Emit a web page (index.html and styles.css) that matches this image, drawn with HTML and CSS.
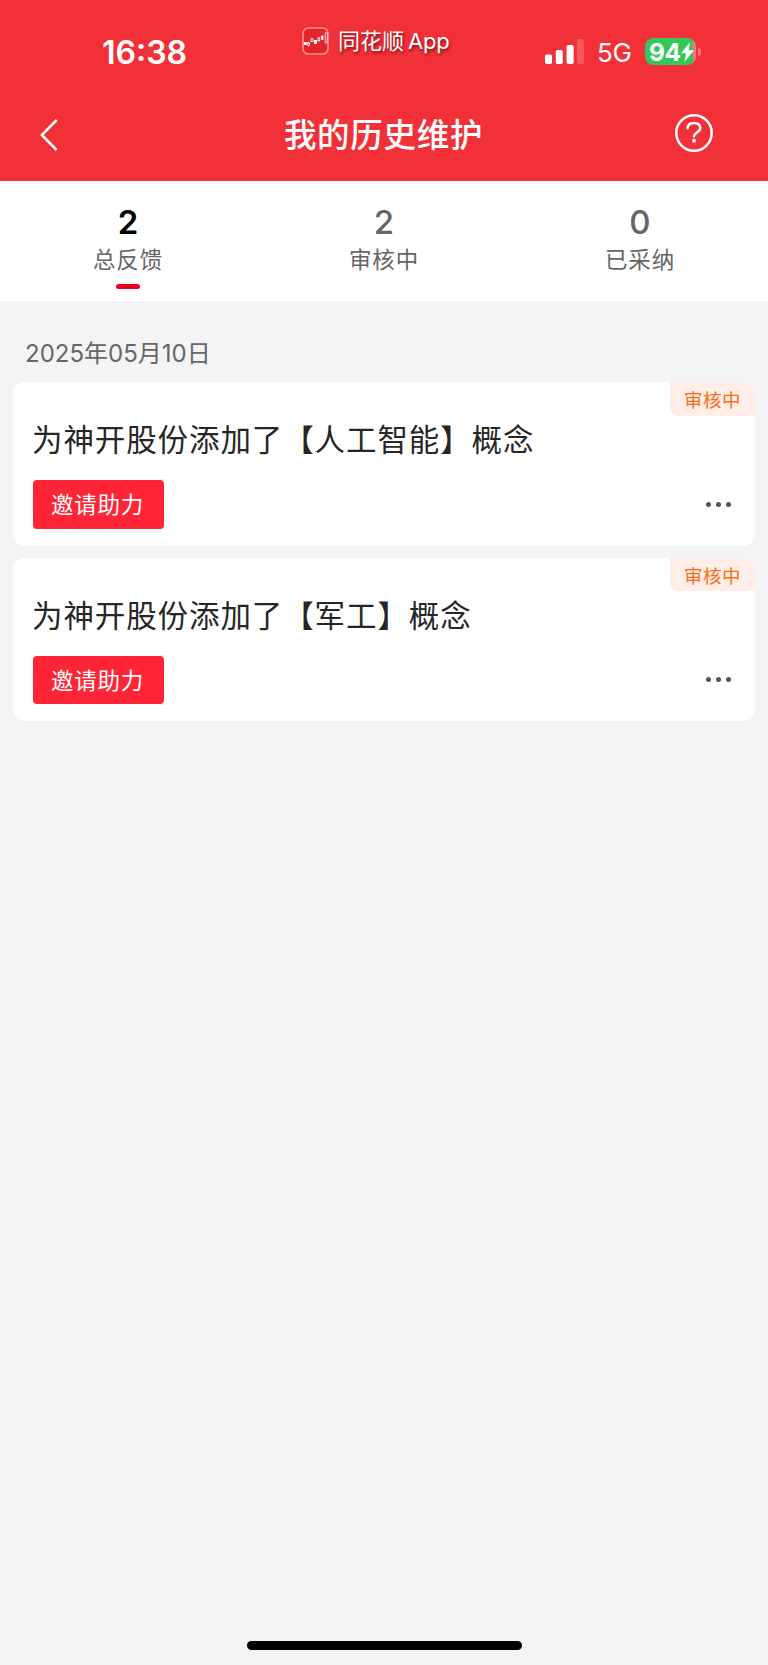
FILE: index.html
```
<!DOCTYPE html>
<html lang="zh-CN">
<head>
<meta charset="utf-8">
<title>我的历史维护</title>
<link rel="stylesheet" href="styles.css">
</head>
<body>
<div class="screen">
  <header class="header">
    <div class="status">
      <div class="time">16:38</div>
      <div class="source">
        <svg class="app-icon" viewBox="0 0 27 28"><rect x="1" y="1" width="25" height="26" rx="5.5" fill="#e3242a" stroke="#f98f91" stroke-width="1.6"/><g fill="#fff"><rect x="1.8" y="15" width="3" height="3"/><rect x="12" y="13" width="3" height="4"/><rect x="19" y="9" width="2.4" height="3.8"/></g><g stroke="#fff" stroke-width=".8" fill="none"><rect x="5.7" y="15.7" width="1.8" height="2.8"/><path d="M6.6 14.6v1.1M6.6 18.5v1.1M10 11v1M16.8 9.8v1.1M16.8 13.7v.8M20.2 8v1"/><rect x="9" y="11.8" width="2" height="2.8"/><rect x="15.9" y="10.9" width="1.8" height="2.8"/><rect x="23.2" y="5.6" width="2" height="10.6" rx=".6"/></g></svg>
        <span class="source-name">同花顺</span><span class="source-app">App</span>
      </div>
      <div class="indicators">
        <svg class="signal" viewBox="0 0 40 26" fill="#fff"><rect x="0" y="15.5" width="7" height="9.5" rx="1.8"/><rect x="10.8" y="11" width="7" height="14" rx="1.8"/><rect x="21.6" y="6" width="7" height="19" rx="1.8"/><rect x="32" y="0" width="7" height="25" rx="1.8" opacity=".2"/></svg>
        <span class="network">5G</span>
        <div class="battery"><span class="level">94</span><svg class="bolt" viewBox="0 0 13 20"><path d="M9.2 0 0 11.2h5L3.4 20 13 8.2H7.6Z" fill="#fff"/></svg></div><i class="cap"></i>
      </div>
    </div>
    <div class="nav">
      <svg class="back" viewBox="0 0 18 32"><path d="M16.7 1 1.8 16 16.7 31" fill="none" stroke="#fff" stroke-width="2.5"/></svg>
      <h1 class="title">我的历史维护</h1>
      <svg class="help" viewBox="0 0 38 38"><circle cx="19" cy="19" r="17.7" fill="none" stroke="#fff" stroke-width="2.5"/><path d="M12.6 14.2C12.8 10.6 15.4 9 19 9c3.7 0 6.3 1.9 6.3 5.1 0 4.1-6 4.2-6.3 8.3" fill="none" stroke="#fff" stroke-width="2.5" stroke-linecap="round"/><circle cx="19" cy="26.7" r="2" fill="#fff"/></svg>
    </div>
  </header>
  <nav class="tabs">
    <div class="tab active"><b class="count">2</b><span class="label">总反馈</span><i class="mark"></i></div>
    <div class="tab"><b class="count">2</b><span class="label">审核中</span></div>
    <div class="tab"><b class="count">0</b><span class="label">已采纳</span></div>
  </nav>
  <main class="list">
    <div class="date"><span>2025</span>年<span>05</span>月<span>10</span>日</div>
    <article class="card">
      <span class="badge">审核中</span>
      <h2 class="text">为神开股份添加了【人工智能】概念</h2>
      <div class="actions"><button class="invite">邀请助力</button><div class="more"><i></i><i></i><i></i></div></div>
    </article>
    <article class="card">
      <span class="badge">审核中</span>
      <h2 class="text">为神开股份添加了【军工】概念</h2>
      <div class="actions"><button class="invite">邀请助力</button><div class="more"><i></i><i></i><i></i></div></div>
    </article>
  </main>
  <div class="home"></div>
</div>
</body>
</html>
```
FILE: styles.css
```
* { box-sizing: border-box; margin: 0; padding: 0; }
body { background: #f4f4f4; font-family: Inter, "Noto Sans CJK SC", sans-serif; }
.screen { width: 768px; height: 1665px; display: flex; flex-direction: column; overflow: hidden; }
svg { display: block; flex: none; }
.header { height: 180.5px; flex: none; background: #f23038; color: #fff; }
.status { display: flex; height: 90px; }
.time { width: 302px; padding: 33px 0 0 102px; font-size: 32px; line-height: 40px; font-weight: 600; }
.source { width: 243px; display: flex; align-items: flex-start; padding-top: 27px; text-shadow: 1px 2px 3px rgba(70,0,0,.65); }
.app-icon { width: 27px; height: 28px; }
.source-name { margin-left: 9px; font-size: 22px; line-height: 30px; margin-top: -1px; white-space: nowrap; }
.source-app { margin-left: 4px; font-size: 22px; line-height: 30px; margin-top: -1px; letter-spacing: -.2px; }
.indicators { display: flex; align-items: flex-start; padding-top: 38px; }
.signal { width: 40px; height: 26px; margin-top: 1px; }
.network { margin-left: 12px; width: 48px; font-size: 26px; line-height: 30px; letter-spacing: -.4px; }
.battery { display: flex; width: 51px; height: 27px; border-radius: 8.5px; background: linear-gradient(90deg, #35c759 48px, #f6777d 48px); padding-left: 4px; }
.level { font-size: 24.5px; line-height: 28px; font-weight: 700; letter-spacing: -.4px; width: 31.5px; }
.bolt { width: 13px; height: 20px; margin-top: 3.5px; }
.cap { width: 3px; height: 8px; margin: 10px 0 0 2px; border-radius: 0 4px 4px 0; background: #f6777d; }
.nav { height: 90px; display: flex; align-items: flex-start; }
.back { width: 18px; height: 32px; margin: 29px 0 0 40px; }
.title { width: 617px; text-align: center; font-size: 32.5px; line-height: 50px; font-weight: 500; letter-spacing: .7px; padding-left: 34px; margin-top: 21px; }
.help { width: 38px; height: 38px; margin: 24px 0 0; }
.tabs { height: 120.5px; flex: none; background: #fff; display: grid; grid-template-columns: repeat(3, 1fr); }
.tab { display: flex; flex-direction: column; align-items: center; color: #666; padding-top: 21px; }
.count { font-size: 33px; line-height: 40px; font-weight: 500; }
.active .count { color: #000; font-weight: 600; }
.label { font-size: 22.5px; line-height: 32px; letter-spacing: .8px; margin-top: 2px; }
.mark { width: 24px; height: 5.5px; border-radius: 3px; background: #f00020; margin-top: 8px; }
.list { flex: 1; padding: 0 13px; }
.date { height: 81px; padding: 36px 12px 0; font-size: 24px; line-height: 34px; color: #666; }
.card { position: relative; height: 163.5px; margin-bottom: 12px; border-radius: 12px; background: #fff; padding: 35px 20px 0; overflow: hidden; }
.badge { position: absolute; top: 0; right: 0; width: 85px; height: 33.5px; border-radius: 0 0 0 8px; background: #ffeee7; color: #ff6a1c; font-size: 18.5px; line-height: 36px; text-align: center; letter-spacing: .5px; }
.text { font-size: 30.5px; line-height: 46px; font-weight: 400; letter-spacing: .9px; margin-left: -1px; color: #262626; white-space: nowrap; }
.actions { display: flex; align-items: center; justify-content: space-between; margin-top: 17px; }
.invite { width: 131px; height: 48.5px; border: 0; border-radius: 4px; background: #ff2436; color: #fff; font: 22.5px/46px "Noto Sans CJK SC", sans-serif; letter-spacing: .8px; padding: 0 2px 2px 0; }
.more { display: flex; gap: 5px; padding-right: 4.5px; }
.more i { width: 5px; height: 5px; border-radius: 50%; background: #555; }
.home { width: 275px; height: 9px; margin: 0 auto 15px; border-radius: 5px; background: #000; flex: none; }
```
